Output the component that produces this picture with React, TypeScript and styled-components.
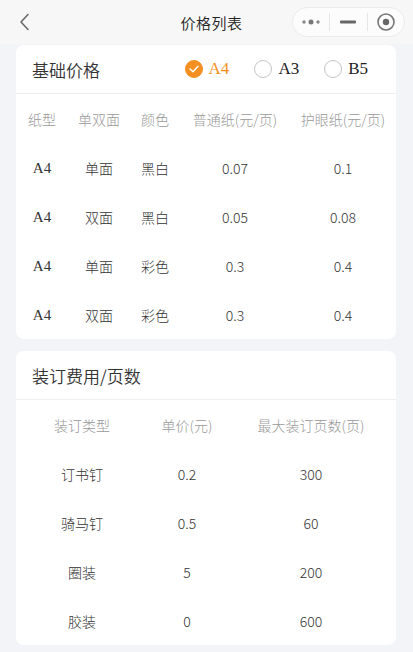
import React from "react";
import styled, { createGlobalStyle } from "styled-components";

const Global = createGlobalStyle`
  html, body { margin: 0; padding: 0; background: #f3f4f8; }
  body { font-family: "Noto Sans CJK SC", "Noto Sans", sans-serif; color: #333; }
  * { box-sizing: border-box; }
`;

const Page = styled.div`
  width: 413px;
  min-height: 652px;
  background: #f3f4f8;
  display: flex;
  flex-direction: column;
`;

const NavBar = styled.div`
  height: 44px;
  background: #f7f7f7;
  display: grid;
  grid-template-columns: 1fr auto 1fr;
  align-items: center;
  padding: 0 8px 0 18px;
`;

const BackBtn = styled.div`
  display: flex;
  align-items: center;
`;

const NavTitle = styled.div`
  font-size: 15px;
  font-weight: 350;
  color: #222;
  letter-spacing: 0.5px;
`;

const Capsule = styled.div`
  justify-self: end;
  width: 113px;
  height: 30px;
  border-radius: 15px;
  border: 1px solid #ebebeb;
  background: rgba(255, 255, 255, 0.6);
  display: grid;
  grid-template-columns: 1fr 1px 1fr 1px 1fr;
  align-items: center;
  justify-items: center;
`;

const CapDivider = styled.div`
  width: 1px;
  height: 18px;
  background: #e6e6e6;
`;

const Content = styled.div`
  display: flex;
  flex-direction: column;
  gap: 12px;
  padding: 1px 17px 8px 16px;
`;

const Card = styled.div`
  background: #fff;
  border-radius: 8px;
  overflow: hidden;
`;

const CardHeader = styled.div`
  height: 49px;
  display: flex;
  align-items: center;
  justify-content: space-between;
  padding: 0 16px 0 16px;
  border-bottom: 1px solid #eeeeee;
`;

const CardTitle = styled.div`
  font-size: 17px;
  font-weight: 350;
  color: #333;
`;

const RadioGroup = styled.div`
  display: flex;
  align-items: center;
  gap: 25px;
  margin-right: 12px;
`;

const RadioItem = styled.div`
  display: flex;
  align-items: center;
  gap: 6px;
`;

const RadioCircle = styled.div<{ $checked?: boolean }>`
  width: 18px;
  height: 18px;
  border-radius: 50%;
  border: 1px solid ${(p) => (p.$checked ? "#f39021" : "#c4c4c4")};
  background: ${(p) => (p.$checked ? "#f39021" : "#fff")};
  display: flex;
  align-items: center;
  justify-content: center;
`;

const RadioLabel = styled.span<{ $checked?: boolean }>`
  font-family: "Liberation Serif", "Times New Roman", serif;
  font-size: 17px;
  color: ${(p) => (p.$checked ? "#f39021" : "#222")};
`;

const Table = styled.div<{ $cols: string }>`
  display: grid;
  grid-template-columns: ${(p) => p.$cols};
  grid-auto-rows: 49px;
`;

const Cell = styled.div<{ $head?: boolean; $serif?: boolean }>`
  display: flex;
  align-items: center;
  justify-content: center;
  font-size: ${(p) => (p.$serif ? "15px" : "14px")};
  padding-top: ${(p) => (p.$serif ? "2px" : "0")};
  white-space: nowrap;
  color: ${(p) => (p.$head ? "#999" : "#333")};
  font-family: ${(p) =>
    p.$serif
      ? '"Liberation Serif", "Times New Roman", serif'
      : '"Noto Sans CJK SC", "Noto Sans", sans-serif'};
  font-weight: 300;
`;

const priceRows = [
  ["A4", "单面", "黑白", "0.07", "0.1"],
  ["A4", "双面", "黑白", "0.05", "0.08"],
  ["A4", "单面", "彩色", "0.3", "0.4"],
  ["A4", "双面", "彩色", "0.3", "0.4"],
];

const bindRows = [
  ["订书钉", "0.2", "300"],
  ["骑马钉", "0.5", "60"],
  ["圈装", "5", "200"],
  ["胶装", "0", "600"],
];

export default function App() {
  return (
    <Page>
      <Global />
      <NavBar>
        <BackBtn>
          <svg width="12" height="18" viewBox="0 0 12 18">
            <path d="M10 1.5 L3 9 L10 16.5" fill="none" stroke="#666" strokeWidth="1.5" strokeLinecap="round" strokeLinejoin="round" />
          </svg>
        </BackBtn>
        <NavTitle>价格列表</NavTitle>
        <Capsule>
          <svg width="20" height="8" viewBox="0 0 20 8">
            <circle cx="3" cy="4" r="1.7" fill="#888" />
            <circle cx="10" cy="4" r="2.5" fill="#777" />
            <circle cx="17" cy="4" r="1.7" fill="#888" />
          </svg>
          <CapDivider />
          <svg width="16" height="4" viewBox="0 0 16 4">
            <rect x="0" y="0.5" width="16" height="3" rx="1" fill="#666" />
          </svg>
          <CapDivider />
          <svg width="20" height="20" viewBox="0 0 20 20">
            <circle cx="10" cy="10" r="8" fill="none" stroke="#777" strokeWidth="1.6" />
            <circle cx="10" cy="10" r="3.2" fill="#666" />
          </svg>
        </Capsule>
      </NavBar>
      <Content>
        <Card>
          <CardHeader>
            <CardTitle>基础价格</CardTitle>
            <RadioGroup>
              <RadioItem>
                <RadioCircle $checked>
                  <svg width="10" height="8" viewBox="0 0 10 8">
                    <path d="M1 4 L4 6.8 L9 1.2" fill="none" stroke="#fff" strokeWidth="1.4" strokeLinecap="round" strokeLinejoin="round" />
                  </svg>
                </RadioCircle>
                <RadioLabel $checked>A4</RadioLabel>
              </RadioItem>
              <RadioItem>
                <RadioCircle />
                <RadioLabel>A3</RadioLabel>
              </RadioItem>
              <RadioItem>
                <RadioCircle />
                <RadioLabel>B5</RadioLabel>
              </RadioItem>
            </RadioGroup>
          </CardHeader>
          <Table $cols="52px 62px 50px 110px 1fr">
            {["纸型", "单双面", "颜色", "普通纸(元/页)", "护眼纸(元/页)"].map((h) => (
              <Cell key={h} $head>{h}</Cell>
            ))}
            {priceRows.map((r, i) =>
              r.map((v, j) => (
                <Cell key={`${i}-${j}`} $serif={j === 0}>
                  {v}
                </Cell>
              ))
            )}
          </Table>
        </Card>
        <Card>
          <CardHeader>
            <CardTitle>装订费用/页数</CardTitle>
          </CardHeader>
          <Table $cols="132px 78px 1fr">
            {["装订类型", "单价(元)", "最大装订页数(页)"].map((h) => (
              <Cell key={h} $head>{h}</Cell>
            ))}
            {bindRows.map((r, i) =>
              r.map((v, j) => (
                <Cell key={`${i}-${j}`}>
                  {v}
                </Cell>
              ))
            )}
          </Table>
        </Card>
      </Content>
    </Page>
  );
}
